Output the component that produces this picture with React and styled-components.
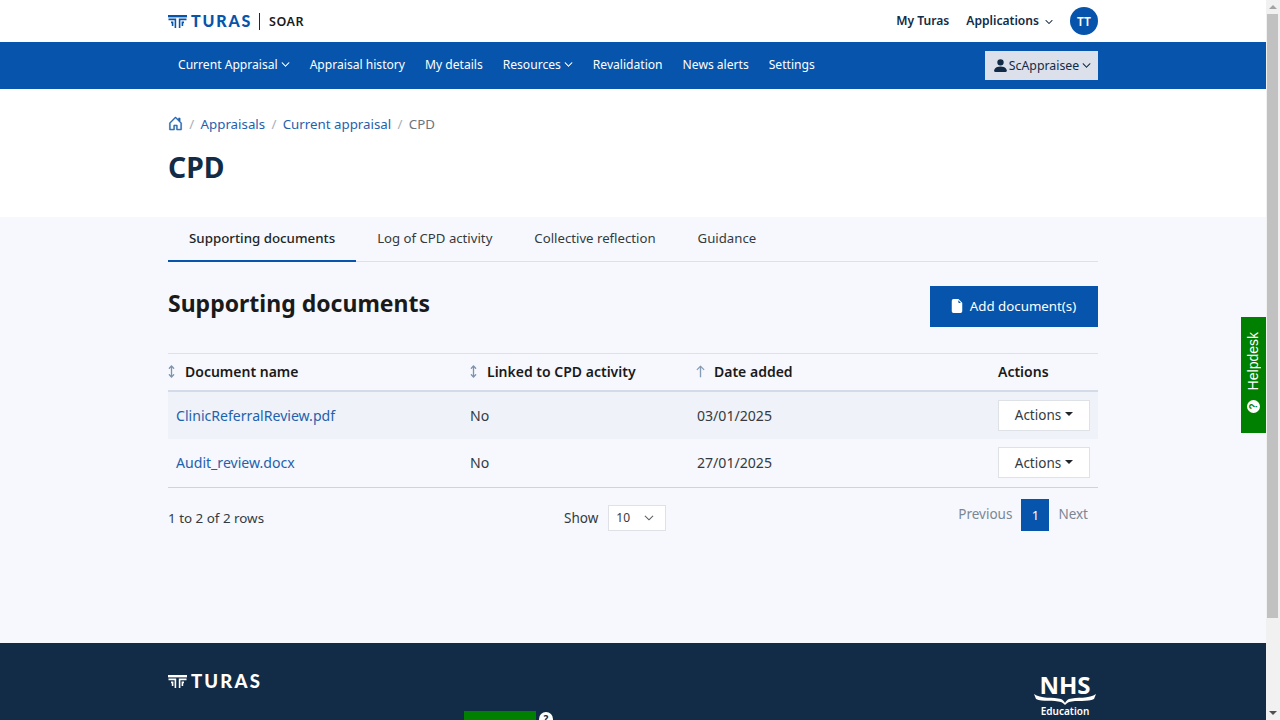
import React from "react";
import styled, { createGlobalStyle } from "styled-components";
import { BsHouseDoor, BsPersonFill, BsFileEarmarkFill, BsArrowUp, BsChevronDown } from "react-icons/bs";
import { MoveVertical } from "lucide-react";

const GlobalStyle = createGlobalStyle`
  html, body {
    margin: 0;
    height: 720px;
    overflow: hidden;
    font-family: "Noto Sans", "Open Sans", sans-serif;
    font-size: 14px;
    color: #212529;
  }
  * { box-sizing: border-box; }
`;

const Frame = styled.div`
  display: flex;
  width: 1280px;
  height: 720px;
  overflow: hidden;
`;

const Page = styled.div`
  position: relative;
  flex: 1;
  min-width: 0;
  display: flex;
  flex-direction: column;
  overflow: hidden;
  background: #f6f8fd;
`;

const Scrollbar = styled.div`
  width: 14px;
  background: #f1f1f1;
  display: flex;
  flex-direction: column;
  justify-content: space-between;
`;

const ScrollArrow = styled.div`
  width: 14px;
  height: 14px;
  display: flex;
  align-items: center;
  justify-content: center;
  flex: none;
  &::before {
    content: "";
    border-left: 4px solid transparent;
    border-right: 4px solid transparent;
    ${(p) => (p.$down ? "border-top: 4px solid #505050;" : "border-bottom: 4px solid #a3a3a3;")}
  }
`;

const ScrollThumb = styled.div`
  width: 11px;
  height: 604px;
  margin-left: 1px;
  background: #c1c1c1;
  flex: none;
  margin-bottom: auto;
`;

const Wrap = styled.div`
  width: 930px;
  margin: 0 auto;
`;

const TopBar = styled.header`
  height: 42px;
  background: #fff;
  flex: none;
`;

const TopInner = styled(Wrap)`
  height: 100%;
  display: flex;
  align-items: center;
  justify-content: space-between;
`;

const Brand = styled.div`
  display: flex;
  align-items: center;
`;

const LogoWord = styled.span`
  font-family: Lato, sans-serif;
  font-weight: 900;
  font-size: ${(p) => p.$size}px;
  letter-spacing: ${(p) => p.$spacing}px;
  margin-left: 4px;
  color: ${(p) => p.$color};
  line-height: 1;
`;

const BrandDivider = styled.span`
  width: 1px;
  height: 17px;
  background: #122b46;
  margin: 0 9px 0 7px;
`;

const AppName = styled.span`
  font-size: 12.5px;
  font-weight: 600;
  letter-spacing: 0.5px;
  color: #1a1a1a;
`;

const TopLinks = styled.div`
  display: flex;
  align-items: center;
`;

const TopLink = styled.a`
  display: flex;
  align-items: center;
  gap: 6px;
  font-size: 12.1px;
  font-weight: 600;
  color: #122b46;
  padding-bottom: 2px;
  margin-right: ${(p) => p.$mr}px;
  svg { margin-top: 3px; }
`;

const Avatar = styled.div`
  width: 28px;
  height: 28px;
  border-radius: 50%;
  background: #0654ab;
  color: #fff;
  font-size: 12px;
  font-weight: 600;
  display: flex;
  align-items: center;
  justify-content: center;
`;

const NavBar = styled.nav`
  height: 47px;
  background: #0654ab;
  flex: none;
`;

const NavInner = styled(Wrap)`
  height: 100%;
  display: flex;
  align-items: center;
  justify-content: space-between;
  padding-left: 10px;
`;

const NavLinks = styled.div`
  display: flex;
  gap: 20px;
`;

const NavLink = styled.a`
  display: flex;
  align-items: center;
  gap: 3px;
  color: #fff;
  font-size: 12.1px;
  padding-bottom: 2px;
`;

const UserButton = styled.button`
  width: 113px;
  height: 29px;
  border: none;
  background: #dbe0ea;
  color: #122b46;
  font: inherit;
  font-size: 12.3px;
  display: flex;
  align-items: center;
  justify-content: center;
  padding: 0;
  svg:last-child { margin-left: 3px; }
`;

const TitleBlock = styled.section`
  background: #fff;
  height: 128px;
  flex: none;
`;

const Crumbs = styled.ol`
  list-style: none;
  margin: 0;
  padding: 24px 0 0;
  display: flex;
  align-items: center;
  height: 45px;
  font-size: 13.3px;
`;

const Crumb = styled.li`
  display: flex;
  align-items: center;
  color: ${(p) => (p.$current ? "#6c757d" : "#1e62ad")};
  &:not(:first-child)::before {
    content: "/";
    color: #a9afb6;
    margin: 0 6.3px;
  }
`;

const PageTitle = styled.h1`
  margin: 14px 0 0;
  font-size: 28.3px;
  line-height: 38px;
  font-weight: 700;
  color: #122b46;
`;

const Main = styled.main`
  flex: 1;
`;

const Tabs = styled.div`
  display: flex;
  height: 45px;
  border-bottom: 1px solid #dee2e6;
`;

const Tab = styled.a`
  display: flex;
  align-items: center;
  padding: 0 21px 1px;
  font-size: ${(p) => (p.$active ? 13.32 : 13.2)}px;
  color: ${(p) => (p.$active ? "#212529" : "#343a40")};
  font-weight: ${(p) => (p.$active ? 500 : 400)};
  border-bottom: 2px solid ${(p) => (p.$active ? "#0654ab" : "transparent")};
  height: 45px;
`;

const SectionHead = styled.div`
  display: flex;
  justify-content: space-between;
  align-items: flex-start;
  padding-top: 24px;
  height: 91px;
`;

const SectionTitle = styled.h2`
  margin: 0;
  font-size: 23px;
  line-height: 34px;
  font-weight: 700;
  color: #1a1a1a;
`;

const PrimaryButton = styled.button`
  width: 168px;
  height: 41px;
  border: none;
  background: #0654ab;
  color: #fff;
  font: inherit;
  font-size: 13.3px;
  display: flex;
  align-items: center;
  justify-content: center;
  gap: 6px;
  padding: 0 2px 1px 0;
`;

const Table = styled.table`
  width: 100%;
  border-collapse: collapse;
  table-layout: fixed;
  font-size: 14.1px;
`;

const HeadCell = styled.th`
  height: 37px;
  padding: 0;
  text-align: left;
  font-size: 14px;
  font-weight: 600;
  color: #1a1a1a;
  border-top: 1px solid #dee2e6;
  border-bottom: 2px solid #d3dbe8;
  width: ${(p) => p.$width}px;
`;

const HeadLabel = styled.span`
  display: flex;
  align-items: center;
  gap: 7px;
  svg {
    color: #7c93ae;
    flex: none;
    margin-left: -3px;
  }
`;

const Row = styled.tr`
  background: ${(p) => (p.$shade ? "#eff2f9" : "transparent")};
  height: 48px;
`;

const Cell = styled.td`
  padding: 0 0 0 ${(p) => p.$pad || 0}px;
  color: #343a40;
`;

const FileLink = styled.a`
  color: #1e62ad;
`;

const ActionsButton = styled.button`
  width: 92px;
  height: 31px;
  background: #fff;
  border: 1px solid #dee2e6;
  font: inherit;
  font-size: 13.5px;
  color: #343a40;
  padding: 0;
  display: inline-flex;
  align-items: center;
  justify-content: center;
  gap: 4px;
  &::after {
    content: "";
    border-top: 4px solid #212529;
    border-left: 4px solid transparent;
    border-right: 4px solid transparent;
    margin-bottom: 2px;
  }
`;

const TableFoot = styled.div`
  border-top: 1px solid #ced4da;
  display: grid;
  grid-template-columns: 396px 1fr auto;
  align-items: start;
  padding-top: 11px;
`;

const RowCount = styled.div`
  padding-top: 10px;
  color: #343a40;
  font-size: 13.4px;
`;

const PageSize = styled.div`
  display: flex;
  align-items: center;
  gap: 10px;
  padding-top: 6px;
  font-size: 13.5px;
  color: #343a40;
`;

const SizeSelect = styled.div`
  width: 58px;
  height: 26px;
  background: #fff;
  border: 1px solid #dee2e6;
  display: flex;
  align-items: center;
  justify-content: space-between;
  padding: 0 11px 0 7px;
  font-size: 12px;
`;

const Pager = styled.div`
  display: flex;
  align-items: center;
  height: 32px;
  padding-right: 10px;
`;

const PagerText = styled.span`
  color: #7b8794;
  font-size: 13.5px;
  padding-bottom: 2px;
  margin: ${(p) => p.$margin};
`;

const PagerCurrent = styled.span`
  width: 28px;
  height: 32px;
  background: #0654ab;
  color: #fff;
  font-size: 13px;
  display: flex;
  align-items: center;
  justify-content: center;
`;

const Footer = styled.footer`
  height: 77px;
  background: #122b46;
  flex: none;
  overflow: hidden;
`;

const FooterInner = styled(Wrap)`
  position: relative;
  height: 100%;
  display: flex;
  justify-content: space-between;
  padding-top: 29px;
`;

const FooterBrand = styled.div`
  display: flex;
  align-items: center;
  height: 18px;
`;

const NhsLogo = styled.div`
  display: flex;
  flex-direction: column;
  align-items: center;
  margin: 1px 2px 0 0;
  color: #fff;
  width: 62px;
  svg { margin-top: -3px; }
`;

const NhsText = styled.span`
  font-size: 24px;
  font-weight: 700;
  line-height: 23px;
`;

const NhsSub = styled.span`
  font-size: 10px;
  font-weight: 600;
  line-height: 13px;
`;

const GreenBlock = styled.div`
  position: absolute;
  left: 296px;
  top: 68px;
  width: 72px;
  height: 20px;
  background: #008000;
`;

const HelpBadge = styled.div`
  position: absolute;
  left: 371px;
  top: 69px;
  width: 14px;
  height: 14px;
  border-radius: 50%;
  background: #fff;
  color: #122b46;
  font-size: 10px;
  font-weight: 700;
  display: flex;
  align-items: center;
  justify-content: center;
`;

const Helpdesk = styled.a`
  position: absolute;
  right: 0;
  top: 317px;
  width: 25px;
  height: 116px;
  background: #008000;
  color: #fff;
  display: flex;
  flex-direction: column;
  align-items: center;
  justify-content: flex-end;
  gap: 10px;
  padding-bottom: 20px;
  font-family: "Liberation Sans", Arial, sans-serif;
  font-size: 14px;
`;

const HelpdeskLabel = styled.span`
  writing-mode: vertical-rl;
  transform: rotate(180deg);
  line-height: 25px;
`;

const HelpdeskIcon = styled.span`
  width: 13px;
  height: 13px;
  border-radius: 50%;
  background: #fff;
  color: #008000;
  font-size: 10px;
  font-weight: 700;
  line-height: 13px;
  text-align: center;
  transform: rotate(-90deg);
`;

const TurasMark = ({ color }) => (
  <svg width="19" height="13" viewBox="0 0 19 13" fill="none" stroke={color} strokeWidth="1.6">
    <path d="M0 1.2H19" strokeWidth="2.4" />
    <path d="M0.5 4.4H7.4V13" />
    <path d="M18.5 4.4H11.6V13" />
    <path d="M3 7.4H4.6V11" />
    <path d="M16 7.4H14.4V11" />
  </svg>
);

const rows = [
  { name: "ClinicReferralReview.pdf", linked: "No", date: "03/01/2025", shade: true },
  { name: "Audit_review.docx", linked: "No", date: "27/01/2025" },
];

const App = () => {
  return (
    <Frame>
      <GlobalStyle />
      <Page>
        <TopBar>
          <TopInner>
            <Brand>
              <TurasMark color="#0654ab" />
              <LogoWord $size={16} $spacing={1.8} $color="#0654ab">TURAS</LogoWord>
              <BrandDivider />
              <AppName>SOAR</AppName>
            </Brand>
            <TopLinks>
              <TopLink $mr={17}>My Turas</TopLink>
              <TopLink $mr={17}>
                Applications <BsChevronDown size={8} strokeWidth={1} />
              </TopLink>
              <Avatar>TT</Avatar>
            </TopLinks>
          </TopInner>
        </TopBar>
        <NavBar>
          <NavInner>
            <NavLinks>
              <NavLink>Current Appraisal <BsChevronDown size={9} strokeWidth={1} /></NavLink>
              <NavLink>Appraisal history</NavLink>
              <NavLink>My details</NavLink>
              <NavLink>Resources <BsChevronDown size={9} strokeWidth={1} /></NavLink>
              <NavLink>Revalidation</NavLink>
              <NavLink>News alerts</NavLink>
              <NavLink>Settings</NavLink>
            </NavLinks>
            <UserButton>
              <BsPersonFill size={17} />
              ScAppraisee
              <BsChevronDown size={9} strokeWidth={1} />
            </UserButton>
          </NavInner>
        </NavBar>
        <TitleBlock>
          <Wrap>
            <Crumbs>
              <Crumb><BsHouseDoor size={15} strokeWidth={0.5} /></Crumb>
              <Crumb>Appraisals</Crumb>
              <Crumb>Current appraisal</Crumb>
              <Crumb $current>CPD</Crumb>
            </Crumbs>
            <PageTitle>CPD</PageTitle>
          </Wrap>
        </TitleBlock>
        <Main>
          <Wrap>
            <Tabs>
              <Tab $active>Supporting documents</Tab>
              <Tab>Log of CPD activity</Tab>
              <Tab>Collective reflection</Tab>
              <Tab>Guidance</Tab>
            </Tabs>
            <SectionHead>
              <SectionTitle>Supporting documents</SectionTitle>
              <PrimaryButton>
                <BsFileEarmarkFill size={14} />
                Add document(s)
              </PrimaryButton>
            </SectionHead>
            <Table>
              <thead>
                <tr>
                  <HeadCell $width={302}>
                    <HeadLabel><MoveVertical size={13} strokeWidth={2.4} />Document name</HeadLabel>
                  </HeadCell>
                  <HeadCell $width={227}>
                    <HeadLabel><MoveVertical size={13} strokeWidth={2.4} />Linked to CPD activity</HeadLabel>
                  </HeadCell>
                  <HeadCell $width={301}>
                    <HeadLabel><BsArrowUp size={13} strokeWidth={0.5} />Date added</HeadLabel>
                  </HeadCell>
                  <HeadCell>Actions</HeadCell>
                </tr>
              </thead>
              <tbody>
                {rows.map((row) => (
                  <Row key={row.name} $shade={row.shade}>
                    <Cell $pad={8}><FileLink>{row.name}</FileLink></Cell>
                    <Cell>{row.linked}</Cell>
                    <Cell>{row.date}</Cell>
                    <Cell><ActionsButton>Actions</ActionsButton></Cell>
                  </Row>
                ))}
              </tbody>
            </Table>
            <TableFoot>
              <RowCount>1 to 2 of 2 rows</RowCount>
              <PageSize>
                Show
                <SizeSelect>10 <BsChevronDown size={10} strokeWidth={0.6} /></SizeSelect>
              </PageSize>
              <Pager>
                <PagerText $margin="0 9px 0 0">Previous</PagerText>
                <PagerCurrent>1</PagerCurrent>
                <PagerText $margin="0 0 0 9px">Next</PagerText>
              </Pager>
            </TableFoot>
          </Wrap>
        </Main>
        <Footer>
          <FooterInner>
            <FooterBrand>
              <TurasMark color="#fff" />
              <LogoWord $size={18.5} $spacing={2.2} $color="#fff">TURAS</LogoWord>
            </FooterBrand>
            <GreenBlock />
            <HelpBadge>?</HelpBadge>
            <NhsLogo>
              <NhsText>NHS</NhsText>
              <svg width="62" height="12" viewBox="0 0 62 12" fill="#fff">
                <path d="M0 1C6 6 20 4 27 6C29 7 30 8 31 10C32 8 33 7 35 6C42 4 56 6 62 1L60 6C54 9 42 7 35 9C33 10 32 11 31 12C30 11 29 10 27 9C20 7 8 9 2 6Z" />
              </svg>
              <NhsSub>Education</NhsSub>
            </NhsLogo>
          </FooterInner>
        </Footer>
        <Helpdesk>
          <HelpdeskLabel>Helpdesk</HelpdeskLabel>
          <HelpdeskIcon>?</HelpdeskIcon>
        </Helpdesk>
      </Page>
      <Scrollbar>
        <ScrollArrow />
        <ScrollThumb />
        <ScrollArrow $down />
      </Scrollbar>
    </Frame>
  );
};

export default App;
